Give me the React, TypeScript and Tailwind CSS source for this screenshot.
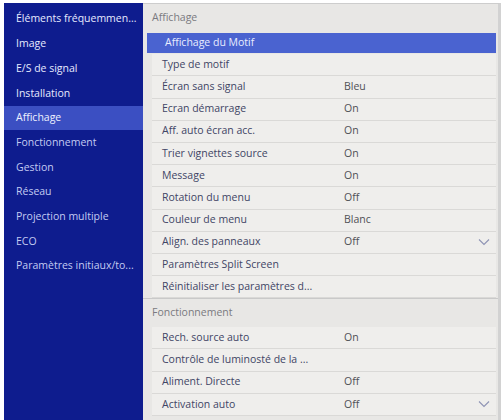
import { ReactNode } from "react";

type Row = { label: string; value?: string; dropdown?: boolean; active?: boolean };

const categories = [
  "Éléments fréquemmen...",
  "Image",
  "E/S de signal",
  "Installation",
  "Affichage",
  "Fonctionnement",
  "Gestion",
  "Réseau",
  "Projection multiple",
  "ECO",
  "Paramètres initiaux/to...",
];

const affichageRows: Row[] = [
  { label: "Affichage du Motif", active: true },
  { label: "Type de motif" },
  { label: "Écran sans signal", value: "Bleu" },
  { label: "Ecran démarrage", value: "On" },
  { label: "Aff. auto écran acc.", value: "On" },
  { label: "Trier vignettes source", value: "On" },
  { label: "Message", value: "On" },
  { label: "Rotation du menu", value: "Off" },
  { label: "Couleur de menu", value: "Blanc" },
  { label: "Align. des panneaux", value: "Off", dropdown: true },
  { label: "Paramètres Split Screen" },
  { label: "Réinitialiser les paramètres d..." },
];

const fonctionnementRows: Row[] = [
  { label: "Rech. source auto", value: "On" },
  { label: "Contrôle de luminosté de la ..." },
  { label: "Aliment. Directe", value: "Off" },
  { label: "Activation auto", value: "Off", dropdown: true },
];

function Chevron() {
  return (
    <svg width="12" height="8" viewBox="0 0 12 8" className="mr-[6px]">
      <path d="M1 1.5 L6 6.5 L11 1.5" fill="none" stroke="#8e93b4" strokeWidth="1.1" />
    </svg>
  );
}

function SettingRow({ row }: { row: Row }) {
  if (row.active) {
    return (
      <div className="h-[22.2px] flex items-center pl-[4px] pr-[2px]">
        <div className="h-[20px] w-full flex items-center bg-[#4a63d0] pl-[18px] text-[#e9edff]">
          {row.label}
        </div>
      </div>
    );
  }
  return (
    <div className="h-[22.2px] flex items-center ml-[9px] mr-[2px] border-b border-[#dad9d7] bg-[#efeeec]">
      <span className="w-[192px] pl-[10px] text-[#414565] whitespace-nowrap">{row.label}</span>
      <span className="flex-1 text-[#505056]">{row.value}</span>
      {row.dropdown && <Chevron />}
    </div>
  );
}

function Section({ title, children }: { title: string; children: ReactNode }) {
  return (
    <div>
      <div className="h-[28px] flex items-center pl-[9px] text-[#7a7a80]">{title}</div>
      {children}
    </div>
  );
}

export default function App() {
  return (
    <div
      className="w-[504px] h-[420px] bg-white pl-[4px] pt-[3px] pr-[3px] overflow-hidden text-[10.5px]"
      style={{ fontFamily: '"Open Sans", "Noto Sans", sans-serif' }}
    >
      <div className="flex h-full">
        <aside className="w-[139px] bg-[#0e1c8e] pt-[4px]">
          {categories.map((c, i) => (
            <div
              key={c}
              className={
                "h-[24.7px] flex items-center pl-[12px] whitespace-nowrap " +
                (c === "Affichage"
                  ? "bg-[#3b4fc2] text-[#eef1ff]"
                  : i > 4
                    ? "text-[#c3cbf2]"
                    : "text-[#e6eaff]")
              }
            >
              {c}
            </div>
          ))}
        </aside>
        <main className="flex-1 bg-[#e8e7e5] border-t border-r-[3px] border-t-[#cdcdcd] border-r-[#d2d2d2]">
          <Section title="Affichage">
            {affichageRows.map((r) => (
              <SettingRow key={r.label} row={r} />
            ))}
          </Section>
          <div className="border-t border-[#c9c9c9]">
            <Section title="Fonctionnement">
              {fonctionnementRows.map((r) => (
                <SettingRow key={r.label} row={r} />
              ))}
            </Section>
          </div>
        </main>
      </div>
    </div>
  );
}
